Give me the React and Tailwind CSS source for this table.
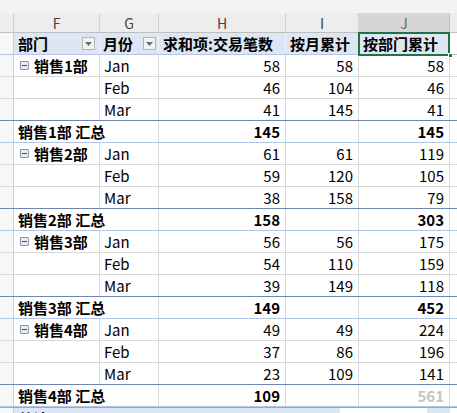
import React from "react";

// pivot data: month, count, month running, dept running
const groups = [
  { name: "销售1部", total: 145, cum: 145, rows: [["Jan", 58, 58, 58], ["Feb", 46, 104, 46], ["Mar", 41, 145, 41]] },
  { name: "销售2部", total: 158, cum: 303, rows: [["Jan", 61, 61, 119], ["Feb", 59, 120, 105], ["Mar", 38, 158, 79]] },
  { name: "销售3部", total: 149, cum: 452, rows: [["Jan", 56, 56, 175], ["Feb", 54, 110, 159], ["Mar", 39, 149, 118]] },
  { name: "销售4部", total: 109, cum: 561, rows: [["Jan", 49, 49, 224], ["Feb", 37, 86, 196], ["Mar", 23, 109, 141]] },
];

const line = "border-r border-[#d9d9d9]";

const FilterButton = () => (
  <div className="flex h-[13px] w-[13px] shrink-0 items-center justify-center border border-[#b5b5b5] bg-[#f3f3f3]">
    <svg width="7" height="4" viewBox="0 0 7 4">
      <path d="M0 0h7L3.5 4z" fill="#6b6b6b" />
    </svg>
  </div>
);

const Collapse = () => (
  <div className="flex h-[9px] w-[9px] shrink-0 items-center justify-center rounded-[1px] border border-[#8a97ab] bg-[#e9edf3]">
    <div className="h-px w-[5px] bg-[#3c4a5e]" />
  </div>
);

const RowNum = () => <div className="h-full w-[14px] shrink-0 border-r border-[#cfcfcf] bg-[#f7f7f7]" />;

function DataRow({ first, name, month, h, i, j, bottom }) {
  return (
    <div className={`flex h-[22px] border-b ${bottom}`}>
      <RowNum />
      <div className={`flex h-full w-[86px] shrink-0 items-center gap-[5px] pl-[6px] font-bold ${line}`}>
        {first && (
          <>
            <Collapse />
            <span>{name}</span>
          </>
        )}
      </div>
      <div className={`flex h-full w-[59px] shrink-0 items-center pl-[4px] ${line}`}>{month}</div>
      <div className={`flex h-full w-[127px] shrink-0 items-center justify-end pr-[5px] ${line}`}>{h}</div>
      <div className={`flex h-full w-[73px] shrink-0 items-center justify-end pr-[5px] ${line}`}>{i}</div>
      <div className={`flex h-full w-[91px] shrink-0 items-center justify-end pr-[5px] ${line}`}>{j}</div>
      <div className="flex-1" />
    </div>
  );
}

function SumRow({ name, total, cum, faded }) {
  return (
    <div className="flex h-[22px] border-b border-[#b4c6e7] font-bold">
      <RowNum />
      <div className={`flex h-full w-[145px] shrink-0 items-center pl-[4px] ${line}`}>{name} 汇总</div>
      <div className={`flex h-full w-[127px] shrink-0 items-center justify-end pr-[5px] ${line}`}>{total}</div>
      <div className={`h-full w-[73px] shrink-0 ${line}`} />
      <div className={`flex h-full w-[91px] shrink-0 items-center justify-end pr-[5px] ${line} ${faded ? "text-[#c4c4c4]" : ""}`}>
        {cum}
      </div>
      <div className="flex-1" />
    </div>
  );
}

export default function App() {
  return (
    <div className="relative h-[413px] w-[457px] overflow-hidden bg-white font-['Noto_Sans_CJK_SC','Liberation_Sans',sans-serif] text-[15px] leading-none text-black">
      <div className="h-[13px] bg-[#f3f3f3]" />
      {/* column letters */}
      <div className="flex h-[20px] border-b border-[#bfbfbf] bg-[#ededed] text-[14px] text-[#444]">
        <div className="h-full w-[14px] shrink-0 border-r border-[#cfcfcf]" />
        {[["F", "w-[86px]"], ["G", "w-[59px]"], ["H", "w-[127px]"], ["I", "w-[73px]"]].map(([l, w]) => (
          <div key={l} className={`flex h-full ${w} shrink-0 items-center justify-center border-r border-[#d4d4d4]`}>{l}</div>
        ))}
        <div className="flex h-full w-[91px] shrink-0 items-center justify-center border-r border-[#c4c4c4] bg-[#d6d6d6] text-[#666]">J</div>
        <div className="flex-1" />
      </div>

      {/* pivot header */}
      <div className="flex h-[22px] border-b border-[#b4c6e7] bg-[#dde6f2] font-bold">
        <div className="h-full w-[14px] shrink-0 border-r border-[#cfcfcf] bg-[#f7f7f7]" />
        <div className="flex h-full w-[86px] shrink-0 items-center justify-between border-r border-[#eef2f8] pl-[4px] pr-[4px]">
          <span>部门</span>
          <FilterButton />
        </div>
        <div className="flex h-full w-[59px] shrink-0 items-center justify-between border-r border-[#eef2f8] pl-[3px] pr-[2px]">
          <span>月份</span>
          <FilterButton />
        </div>
        <div className="flex h-full w-[127px] shrink-0 items-center border-r border-[#eef2f8] pl-[4px]">求和项:交易笔数</div>
        <div className="flex h-full w-[73px] shrink-0 items-center border-r border-[#eef2f8] pl-[4px]">按月累计</div>
        <div className="relative flex h-full w-[91px] shrink-0 items-center pl-[4px]">
          按部门累计
          <div className="absolute -left-px -top-px bottom-[-2px] right-0 border-2 border-[#217346]" />
          <div className="absolute bottom-[-4px] right-[-3px] h-[5px] w-[5px] border border-white bg-[#217346]" />
        </div>
        <div className="flex-1 bg-white" />
      </div>

      {groups.map((g, gi) => (
        <React.Fragment key={g.name}>
          {g.rows.map((r, ri) => (
            <DataRow
              key={r[0]}
              first={ri === 0}
              name={g.name}
              month={r[0]}
              h={r[1]}
              i={r[2]}
              j={r[3]}
              bottom={ri === 2 ? "border-[#6d87b0]" : "border-[#d9d9d9]"}
            />
          ))}
          <SumRow name={g.name} total={g.total} cum={g.cum} faded={gi === 3} />
        </React.Fragment>
      ))}

      {/* grand total, cut off at the bottom */}
      <div className="flex h-[22px] border-t border-[#8eaadb] font-bold">
        <RowNum />
        <div className="flex h-full w-[326px] shrink-0 items-center bg-[#dde6f2] pl-[4px]">总计</div>
        <div className="h-full w-[87px] shrink-0 bg-white" />
        <div className="h-full w-[23px] shrink-0 bg-[#dde6f2]" />
        <div className="flex-1" />
      </div>
    </div>
  );
}
